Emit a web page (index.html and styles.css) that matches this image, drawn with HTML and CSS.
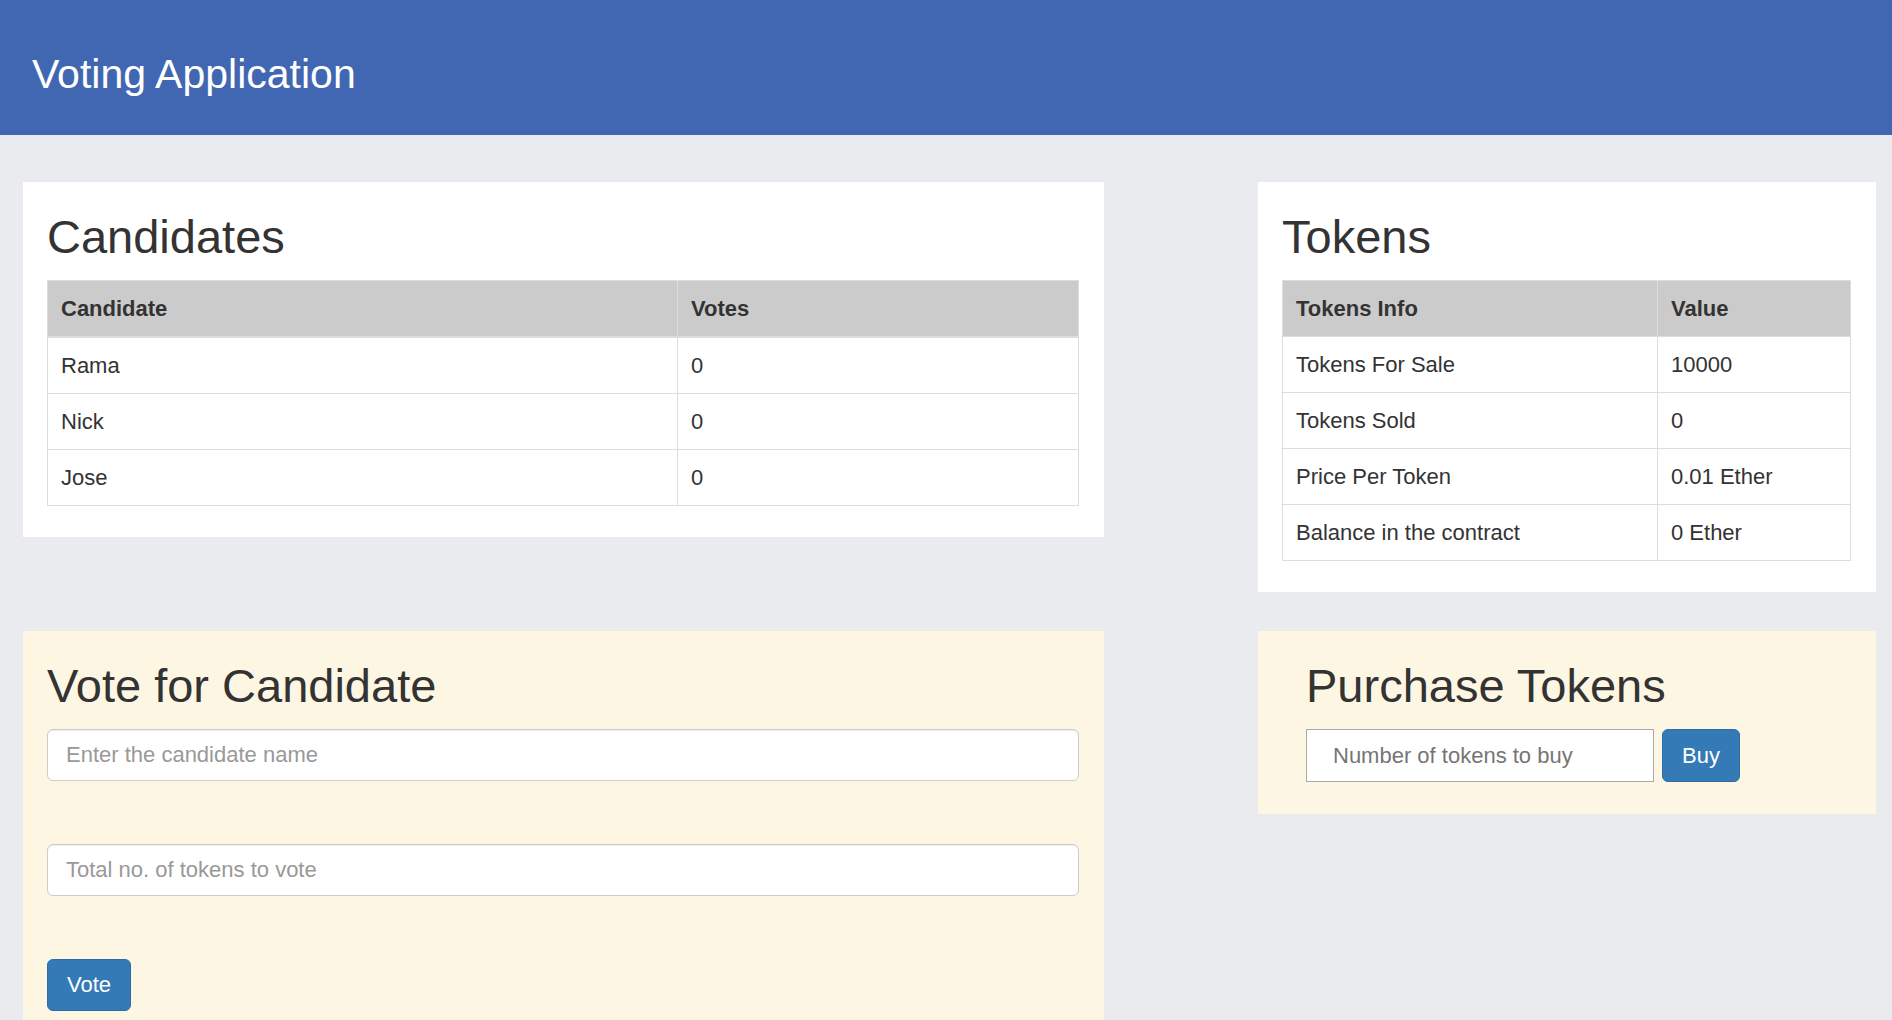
FILE: index.html
```html
<!DOCTYPE html>
<html lang="en">
<head>
<meta charset="utf-8">
<title>Voting Application</title>
<link rel="stylesheet" href="styles.css">
</head>
<body>
<header class="topbar">
  <h1 class="app-title">Voting Application</h1>
</header>
<main class="dashboard">
  <section class="panel panel-white">
    <h2 class="panel-title">Candidates</h2>
    <table class="data-table thick-head">
      <colgroup><col class="col-cand"><col></colgroup>
      <thead>
        <tr><th>Candidate</th><th>Votes</th></tr>
      </thead>
      <tbody>
        <tr><td>Rama</td><td>0</td></tr>
        <tr><td>Nick</td><td>0</td></tr>
        <tr><td>Jose</td><td>0</td></tr>
      </tbody>
    </table>
  </section>

  <section class="panel panel-white">
    <h2 class="panel-title">Tokens</h2>
    <table class="data-table">
      <colgroup><col class="col-info"><col></colgroup>
      <thead>
        <tr><th>Tokens Info</th><th>Value</th></tr>
      </thead>
      <tbody>
        <tr><td>Tokens For Sale</td><td>10000</td></tr>
        <tr><td>Tokens Sold</td><td>0</td></tr>
        <tr><td>Price Per Token</td><td>0.01 Ether</td></tr>
        <tr><td>Balance in the contract</td><td>0 Ether</td></tr>
      </tbody>
    </table>
  </section>

  <section class="panel panel-cream">
    <h2 class="panel-title">Vote for Candidate</h2>
    <div class="form-group">
      <input class="form-control" type="text" placeholder="Enter the candidate name">
    </div>
    <div class="form-group">
      <input class="form-control" type="text" placeholder="Total no. of tokens to vote">
    </div>
    <button class="btn-primary" type="button">Vote</button>
  </section>

  <section class="panel panel-cream purchase">
    <h2 class="panel-title">Purchase Tokens</h2>
    <div class="buy-row">
      <input class="plain-input" type="text" placeholder="Number of tokens to buy">
      <button class="btn-primary btn-buy" type="button">Buy</button>
    </div>
  </section>
</main>
</body>
</html>
```

FILE: styles.css
```css
* {
  box-sizing: border-box;
}

html, body {
  margin: 0;
  padding: 0;
}

body {
  background: #e9ebee;
  color: #333333;
  font-family: "Liberation Sans", Arial, Helvetica, sans-serif;
  font-size: 22px;
  line-height: 31px;
}

.topbar {
  background: #4267b2;
  height: 135px;
  padding: 52px 0 0 32px;
}

.app-title {
  margin: 0;
  color: #ffffff;
  font-size: 41px;
  font-weight: normal;
  line-height: 44px;
}

.dashboard {
  display: grid;
  grid-template-columns: 1081px 618px;
  column-gap: 154px;
  row-gap: 39px;
  align-items: start;
  padding: 47px 0 0 23px;
}

.panel {
  padding: 30px 25px 31px 24px;
}

.panel-white {
  background: #ffffff;
}

.panel-cream {
  background: #fdf6e3;
}

.panel-title {
  margin: 0 0 18px;
  font-size: 47px;
  font-weight: normal;
  line-height: 50px;
  color: #333333;
}

.data-table {
  width: 100%;
  border-collapse: collapse;
  border: 1px solid #dddddd;
}

.col-cand {
  width: 630px;
}

.col-info {
  width: 375px;
}

.data-table th,
.data-table td {
  border: 1px solid #dddddd;
  padding: 12px 12px 12px 13px;
  text-align: left;
  vertical-align: top;
}

.data-table th {
  background: #cbcbcb;
  font-weight: bold;
}

.thick-head th {
  border-bottom: 2px solid #dddddd;
}

.form-group {
  margin-bottom: 63px;
}

.form-control {
  display: block;
  width: 100%;
  height: 52px;
  padding: 0 18px;
  border: 1px solid #cccccc;
  border-radius: 6px;
  background: #ffffff;
  box-shadow: inset 0 1px 1px rgba(0, 0, 0, 0.075);
  font-family: inherit;
  font-size: 22px;
  color: #555555;
}

.form-control::placeholder {
  color: #999999;
}

.btn-primary {
  height: 52px;
  padding: 0 19px;
  border: 1px solid #2e6da4;
  border-radius: 6px;
  background: #337ab7;
  color: #ffffff;
  font-family: inherit;
  font-size: 22px;
  line-height: 1;
}

.purchase {
  padding: 30px 25px 32px 48px;
}

.buy-row {
  display: flex;
  align-items: center;
  gap: 8px;
}

.plain-input {
  width: 348px;
  height: 53px;
  padding: 0 26px;
  border: 1px solid #a9a9a9;
  border-radius: 0;
  background: #ffffff;
  font-family: inherit;
  font-size: 22px;
  color: #333333;
}

.plain-input::placeholder {
  color: #757575;
}

.btn-buy {
  height: 53px;
  padding: 0 19px;
}
```
